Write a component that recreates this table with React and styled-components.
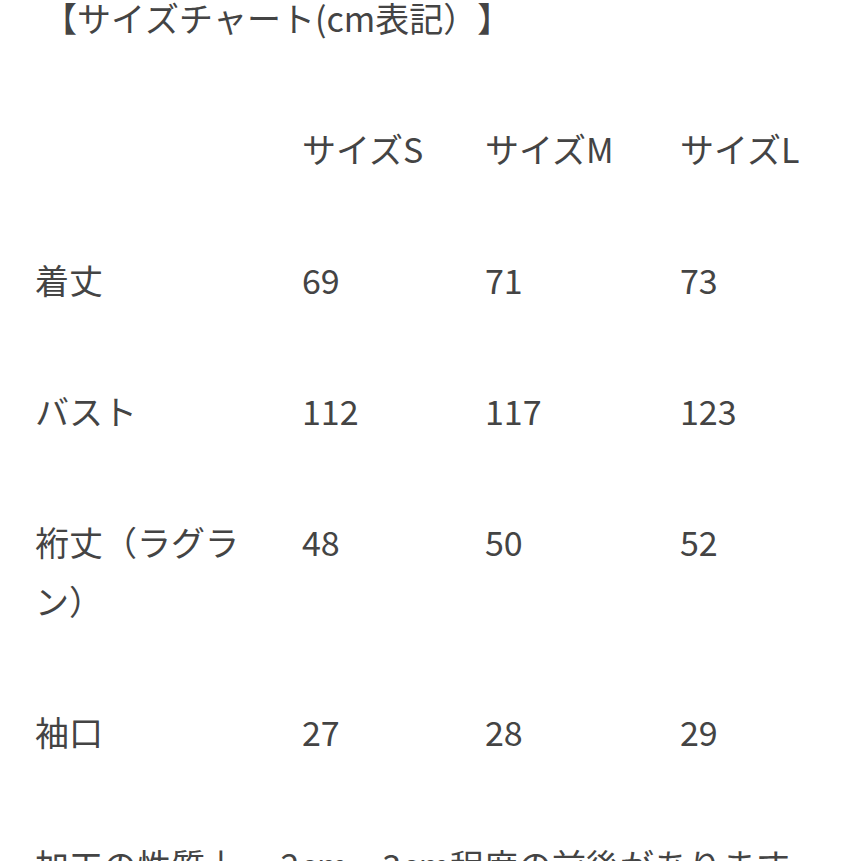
import React from "react";
import styled, { createGlobalStyle } from "styled-components";

const Global = createGlobalStyle`
  html, body { margin: 0; padding: 0; background: #ffffff; }
  body {
    font-family: "Noto Sans CJK JP", "Noto Sans", sans-serif;
    color: #444444;
    overflow: hidden;
  }
`;

const Page = styled.div`
  width: 861px;
  height: 861px;
  overflow: hidden;
  box-sizing: border-box;
  padding-left: 35px;
`;

const Inner = styled.div`
  margin-top: -12px;
`;

const Title = styled.div`
  font-size: 34px;
  line-height: 59px;
  margin-bottom: 36px;
  padding-left: 8px;
  font-kerning: none;
  font-feature-settings: "kern" 0, "chws" 0, "halt" 0, "palt" 0;
  text-spacing-trim: space-all;
  white-space: nowrap;
`;

const Chart = styled.div`
  display: grid;
  grid-template-columns: 267px 183px 195px 1fr;
`;

const Cell = styled.div`
  font-size: 34px;
  line-height: 59px;
  padding: 36px ${(p) => (p.$label ? "40px" : "0")} 36px 0;
  white-space: ${(p) => (p.$label ? "normal" : "nowrap")};
  line-break: strict;
`;

const Note = styled.div`
  font-size: 34px;
  line-height: 59px;
  margin-top: 38px;
  white-space: nowrap;
`;

const header = ["サイズS", "サイズM", "サイズL"];
const rows = [
  ["着丈", "69", "71", "73"],
  ["バスト", "112", "117", "123"],
  ["裄丈（ラグラン）", "48", "50", "52"],
  ["袖口", "27", "28", "29"],
];

export default function App() {
  return (
    <>
      <Global />
      <Page>
        <Inner>
          <Title>【サイズチャート(cm表記）】</Title>
          <Chart>
            <Cell $label />
            {header.map((h) => (
              <Cell key={h}>{h}</Cell>
            ))}
            {rows.map((r) =>
              r.map((v, i) => (
                <Cell key={r[0] + i} $label={i === 0}>
                  {v}
                </Cell>
              ))
            )}
          </Chart>
          <Note>加工の性質上、 2cm～3cm程度の前後があります。</Note>
        </Inner>
      </Page>
    </>
  );
}
